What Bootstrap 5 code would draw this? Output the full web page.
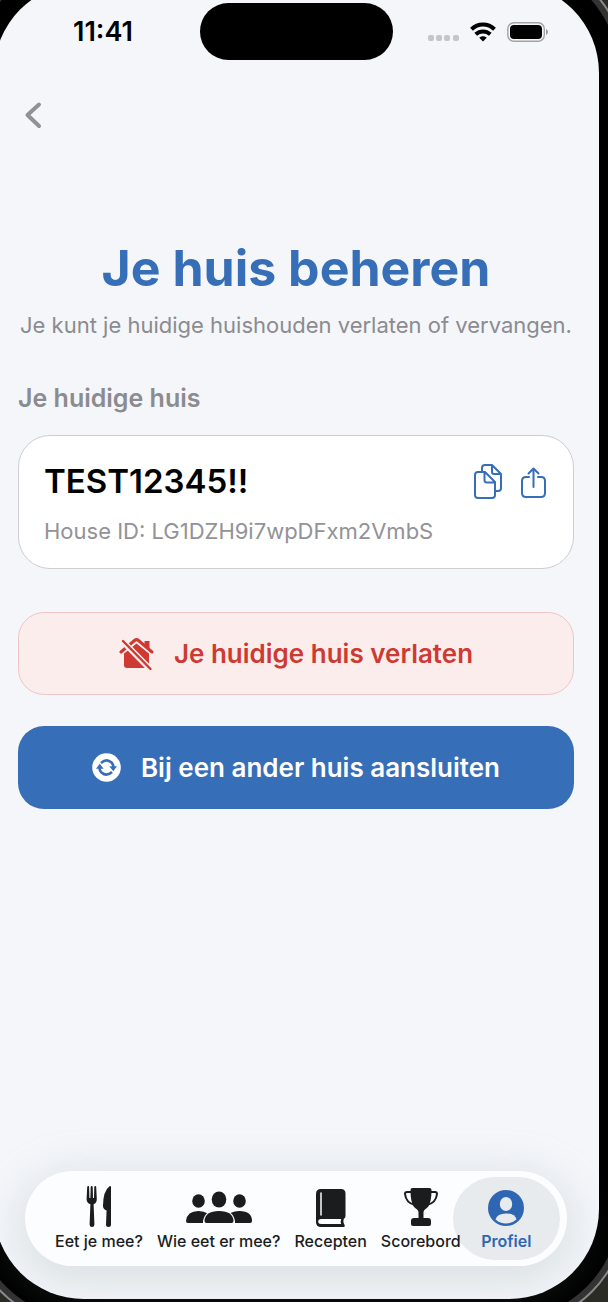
<!DOCTYPE html>
<html lang="nl">
<head>
<meta charset="utf-8">
<meta name="viewport" content="width=device-width, initial-scale=1">
<title>Je huis beheren</title>
<link href="https://cdn.jsdelivr.net/npm/bootstrap@5.3.0/dist/css/bootstrap.min.css" rel="stylesheet">
<style>
  :root { --blue: #376eb8; --red: #ce3a32; --muted: #8b8b90; }
  body { background: #2b2c26; font-family: Inter, "Liberation Sans", sans-serif; color: #000; overflow: hidden; }
  /* Screen with rounded corners inside the device bezel */
  .screen {
    min-height: calc(100vh + 14px); margin: -17px 9px 3px -6px; border-radius: 90px;
    background: #f4f6fa;
    box-shadow: 0 0 0 20px #000, 0 0 0 26px #333, 0 0 0 28px #8a8a8a;
  }
  .status { display: grid; grid-template-columns: 1fr auto 1fr; padding-top: 20px; }
  .clock { padding-left: 79px; font-size: 27px; line-height: 30px; }
  .island { width: 193px; height: 57px; background: #000; }
  .indicators { padding-right: 50px; gap: 11px; }
  .signal { margin-top: 13px; }
  .back { margin: 35px 0 0 24px; width: 32px; height: 40px; }
  .content { padding: 101px 25px 0 24px; }
  h1 { color: var(--blue); font-size: 50px; line-height: 64px; }
  .intro { color: var(--muted); font-size: 22px; line-height: 32px; margin-top: 9px; white-space: nowrap; }
  h2 { color: var(--muted); font-size: 25px; line-height: 32px; margin: 41px 0 0; }
  .house { border: 1px solid #cdced2; border-radius: 32px; padding: 25px 25px 21px; margin-top: 21px; }
  .house-name { font-size: 33px; line-height: 40px; }
  .house-id { color: #929297; font-size: 22px; line-height: 32px; margin-top: 14px; }
  .action { height: 83px; border-radius: 26px; font-size: 26px; gap: 20px; }
  .leave, .leave:hover { background: #fbedec; color: var(--red); border: 1px solid #efc6c8; margin-top: 43px; }
  .join, .join:hover { background: var(--blue); color: #fff; border: 0; margin-top: 31px; }
  .tabs {
    margin: auto 32px 33px 31px; height: 95px; border-radius: 48px; padding: 6px 7px 6px 30px; gap: 14px;
    background: #fcfdff; box-shadow: 0 10px 44px 8px rgba(145,165,168,.26);
  }
  .tab { font-size: 16px; line-height: 20px; color: #1b1c1e; padding-top: 8px; gap: 2px; white-space: nowrap; z-index: 1; }
  .tab svg { height: 44px; }
  .tab.active { color: #2f66b4; background: #e7ebee; width: 109px; height: 83px; border-radius: 42px; margin-left: -22px; z-index: 0; }
</style>
</head>
<body>
<div class="screen d-flex flex-column">
  <header class="status align-items-center">
    <div class="clock fw-semibold">11:41</div>
    <div class="island rounded-pill"></div>
    <div class="indicators d-flex align-items-center justify-content-end">
      <svg class="signal" width="31" height="6" viewBox="0 0 31 6" fill="#c5c6ca"><rect width="6" height="6" rx="2"/><rect x="8" width="6" height="6" rx="2"/><rect x="16" width="6" height="6" rx="2"/><rect x="25" width="6" height="6" rx="2"/></svg>
      <svg width="26" height="20" viewBox="0 0 26 20" fill="none" stroke="#000" stroke-width="4"><path d="M1.500 7.300C8 .9 18 .9 24.500 7.300"/><path d="M5.700 12.300C10 8.500 16 8.500 20.300 12.300"/><path d="M13 19.500 9.300 15.800C11.300 13.800 14.700 13.800 16.700 15.800Z" fill="#000" stroke="none"/></svg>
      <svg width="42" height="20" viewBox="0 0 42 20"><rect x=".8" y=".8" width="36.500" height="18.400" rx="6" fill="none" stroke="#a3a3a6" stroke-width="1.400"/><rect x="3" y="3" width="32" height="14" rx="4"/><path d="M39 7v6q2-1 2-3t-2-3Z" fill="#98989c"/></svg>
    </div>
  </header>

  <button class="back btn border-0 p-0 d-flex align-items-center" type="button" aria-label="Terug">
    <svg width="28" height="28" viewBox="0 0 28 28" fill="none" stroke="#919196" stroke-width="4" stroke-linecap="round" stroke-linejoin="round"><path d="M21 3.500 9.500 14 21 25"/></svg>
  </button>

  <main class="content">
    <h1 class="fw-bold text-center mb-0">Je huis beheren</h1>
    <p class="intro d-flex justify-content-center mb-0">Je kunt je huidige huishouden verlaten of vervangen.</p>
    <h2 class="fw-semibold">Je huidige huis</h2>

    <section class="house bg-white">
      <div class="d-flex align-items-center justify-content-between">
        <div class="house-name fw-semibold">TEST12345!!</div>
        <div class="d-flex gap-3">
          <button class="btn border-0 p-0 d-flex" type="button" aria-label="Kopiëren">
            <svg width="32" height="38" viewBox="0 0 32 38" fill="none" stroke="#376eb8" stroke-width="2" stroke-linejoin="round"><path d="M10 9V6q0-3 3-3h7L29 12V26q0 3-3 3H23M20 3v7q0 2 2 2h7"/><path d="M6 10h7L23 20V33q0 3-3 3H6q-3 0-3-3V13q0-3 3-3ZM12.500 10v8q0 2.500 2.500 2.500h8"/></svg>
          </button>
          <button class="btn border-0 p-0 d-flex" type="button" aria-label="Delen">
            <svg width="28" height="38" viewBox="0 0 28 38" fill="none" stroke="#376eb8" stroke-width="2" stroke-linecap="round" stroke-linejoin="round"><path d="M9 15H6q-4 0-4 4V31q0 4 4 4H21q4 0 4-4V19q0-4-4-4H18M13.500 25V6.500M8.500 11.500l5-5 5 5"/></svg>
          </button>
        </div>
      </div>
      <div class="house-id">House ID: LG1DZH9i7wpDFxm2VmbS</div>
    </section>

    <button class="action leave btn w-100 fw-semibold d-flex align-items-center justify-content-center" type="button">
      <svg width="35" height="34" viewBox="0 0 35 34"><path d="M5 16.500 17.500 6.500 30 16.500V28q0 3-3 3H8q-3 0-3-3Z" fill="#ce3a32"/><path d="M2 15 15.500 3.500q2-1.700 4 0L33 15" fill="none" stroke="#fbedec" stroke-width="6"/><path d="M2 15 15.500 3.500q2-1.700 4 0L33 15" fill="none" stroke="#ce3a32" stroke-width="3" stroke-linecap="round"/><path d="M25.500 4h5v9l-5-4Z" fill="#ce3a32"/><path d="M2 2.500 33 34" stroke="#fbedec" stroke-width="6"/><path d="M4 4 31.500 32" stroke="#ce3a32" stroke-width="2.400" stroke-linecap="round"/></svg>
      Je huidige huis verlaten
    </button>
    <button class="action join btn w-100 fw-semibold d-flex align-items-center justify-content-center" type="button">
      <svg width="29" height="29" viewBox="0 0 29 29"><circle cx="14.500" cy="14.500" r="14.300" fill="#fff"/><g fill="none" stroke="#376eb8" stroke-width="2.600"><path d="M9 10Q14.500 5 19.500 9.500 21.500 11.500 21.500 14"/><path d="M20 19Q14.500 24 9.500 19.500 7.500 17.500 7.500 15"/></g><path d="M17.300 13.300h7.700L21.300 18.300ZM4 15.700h7.700L7.700 10.700Z" fill="#376eb8"/></svg>
      Bij een ander huis aansluiten
    </button>
  </main>

  <nav class="tabs d-flex" aria-label="Hoofdmenu">
    <a class="tab fw-medium text-decoration-none d-flex flex-column align-items-center" href="#">
      <svg width="28" viewBox="0 0 28 44" fill="currentColor"><path d="M2.200 2q.1-1 1-1t.9 1l.3 11h1l.3-11q.1-1 1-1t1 1l.3 11h1l.3-11q.1-1 1-1t.9 1l.6 12q.1 4-3.200 5.300l.8 20.200q0 2.500-2.400 2.500t-2.400-2.500l.8-20.200Q1.500 18 1.600 14ZM26 2.500v37q0 2.500-2.500 2.500T21 39.500l.6-14Q18 24 18 21 18 6 24.500 1.200 26 .5 26 2.500Z"/></svg>
      Eet je mee?
    </a>
    <a class="tab fw-medium text-decoration-none d-flex flex-column align-items-center" href="#">
      <svg width="68" viewBox="0 0 68 44" fill="currentColor"><g><ellipse cx="13.500" cy="16" rx="6.300" ry="6.800"/><ellipse cx="54.500" cy="16" rx="6.300" ry="6.800"/><path d="M1 36Q2 26 13.500 26T27 36q0 2-2 2H3q-2 0-2-2ZM41 36q1-10 13.500-10T67 36q0 2-2 2H43Z"/></g><path d="M18 40v-4Q20 24.500 34 24.500t16 11.500v4Z" fill="#fcfdff"/><ellipse cx="34" cy="14.500" rx="7.300" ry="8"/><path d="M19.500 36Q20 26 34 26t14.500 10q0 2-2 2H21.500q-2 0-2-2Z"/></svg>
      Wie eet er mee?
    </a>
    <a class="tab fw-medium text-decoration-none d-flex flex-column align-items-center" href="#">
      <svg width="32" viewBox="0 0 32 44" fill="currentColor"><path d="M6 4H26q4.500 0 4.500 4.500V31q0 2-1.800 3-1.200 3 1 6.500.5 1.500-1.200 1.500H6q-5 0-5-5V9q0-5 5-5Z"/><path d="M6.200 34h20q-1 2.500 0 5h-20q-3 0-3-2.500T6.200 34Z" fill="#fcfdff"/><path d="M6 8V30" stroke="#fcfdff" stroke-width="1.500" stroke-linecap="round"/></svg>
      Recepten
    </a>
    <a class="tab fw-medium text-decoration-none d-flex flex-column align-items-center" href="#">
      <svg width="36" viewBox="0 0 36 44" fill="currentColor"><path d="M7.500 5q0-2 2-2H26.500q2 0 2 2 0 16-6 19-2 1.500-2 3v6h4.500q3 0 3 3v3q0 2-2 2H10q-2 0-2-2V36q0-3 3-3h4.500V27q0-1.500-2-3Q7.500 21 7.500 5Z"/><path d="M9 7H4Q2 7 2 9 3 18 12 20M27 7h5q2 0 2 2-1 9-10 11" fill="none" stroke="currentColor" stroke-width="2"/></svg>
      Scorebord
    </a>
    <a class="tab active fw-semibold text-decoration-none d-flex flex-column align-items-center" href="#" aria-current="page">
      <svg width="36" viewBox="0 0 36 44"><circle cx="18" cy="23" r="18" fill="currentColor"/><ellipse cx="18" cy="19" rx="6.200" ry="7" fill="#e7ebee"/><path d="M7.500 34.500Q9 28.500 18 28.500T28.500 34.500Q24 38.500 18 38.500T7.500 34.500Z" fill="#e7ebee"/></svg>
      Profiel
    </a>
  </nav>
</div>
<script src="https://cdn.jsdelivr.net/npm/bootstrap@5.3.0/dist/js/bootstrap.bundle.min.js"></script>
</body>
</html>
